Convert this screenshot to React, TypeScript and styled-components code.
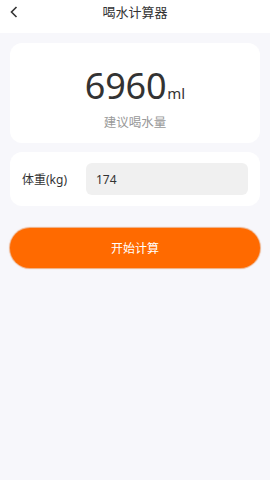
import React, { useState } from 'react';
import styled, { createGlobalStyle } from 'styled-components';

const GlobalStyle = createGlobalStyle`
  body {
    margin: 0;
    background: #f7f7fb;
    font-family: "Noto Sans", "Noto Sans CJK SC", sans-serif;
  }
`;

const Page = styled.div`
  min-height: 480px;
  background: #f7f7fb;
`;

const Header = styled.div`
  height: 33px;
  background: #ffffff;
  display: flex;
  align-items: center;
  justify-content: center;
  position: relative;
  padding-bottom: 10px;
  box-sizing: border-box;
`;

const BackButton = styled.div`
  position: absolute;
  left: 8px;
  top: 6px;
  width: 12px;
  height: 12px;
  display: flex;
  align-items: center;
  justify-content: center;
`;

const Title = styled.div`
  font-size: 13px;
  color: #333;
  line-height: 1;
  margin-top: 2px;
`;

const Content = styled.div`
  padding: 10px 10px;
  display: flex;
  flex-direction: column;
`;

const Card = styled.div<{ $height: number }>`
  background: #ffffff;
  border-radius: 12px;
  height: ${(p) => p.$height}px;
  box-sizing: border-box;
`;

const ResultCard = styled(Card)`
  display: flex;
  flex-direction: column;
  align-items: center;
  padding-top: 21px;
`;

const ValueRow = styled.div`
  display: flex;
  align-items: baseline;
  color: #333;
`;

const Value = styled.span`
  font-size: 36px;
  line-height: 44px;
  letter-spacing: -0.2px;
`;

const Unit = styled.span`
  font-size: 15px;
  margin-left: 1px;
`;

const Caption = styled.div`
  margin-top: 4px;
  font-size: 12.5px;
  color: #999;
`;

const FormCard = styled(Card)`
  margin-top: 9px;
  display: flex;
  align-items: center;
  padding: 0 12px;
`;

const Label = styled.div`
  width: 64px;
  flex-shrink: 0;
  white-space: nowrap;
  font-size: 12px;
  color: #333;
`;

const Input = styled.input`
  flex: 1;
  min-width: 0;
  height: 32px;
  border: none;
  outline: none;
  border-radius: 6px;
  background: #f0f0f0;
  padding: 0 10px;
  font-family: inherit;
  font-size: 12px;
  color: #333;
  box-sizing: border-box;
`;

const StartButton = styled.button`
  margin-top: 22px;
  height: 40px;
  border: none;
  border-radius: 20px;
  background: #ff6a00;
  box-shadow: 0 0 1px 1px rgba(230, 95, 0, 0.5);
  color: #fff;
  font-family: inherit;
  font-size: 12px;
  cursor: pointer;
`;

export default function App() {
  const [weight, setWeight] = useState('174');
  const [result, setResult] = useState(6960);

  return (
    <Page>
      <GlobalStyle />
      <Header>
        <BackButton>
          <svg width="8" height="12" viewBox="0 0 8 12">
            <path d="M6.5 1 L1.5 6 L6.5 11" stroke="#333" strokeWidth="1.6" fill="none" />
          </svg>
        </BackButton>
        <Title>喝水计算器</Title>
      </Header>
      <Content>
        <ResultCard $height={100}>
          <ValueRow>
            <Value>{result}</Value>
            <Unit>ml</Unit>
          </ValueRow>
          <Caption>建议喝水量</Caption>
        </ResultCard>
        <FormCard $height={54}>
          <Label>体重(kg)</Label>
          <Input value={weight} onChange={(e) => setWeight(e.target.value)} />
        </FormCard>
        <StartButton onClick={() => setResult(Math.round(Number(weight) * 40))}>开始计算</StartButton>
      </Content>
    </Page>
  );
}
